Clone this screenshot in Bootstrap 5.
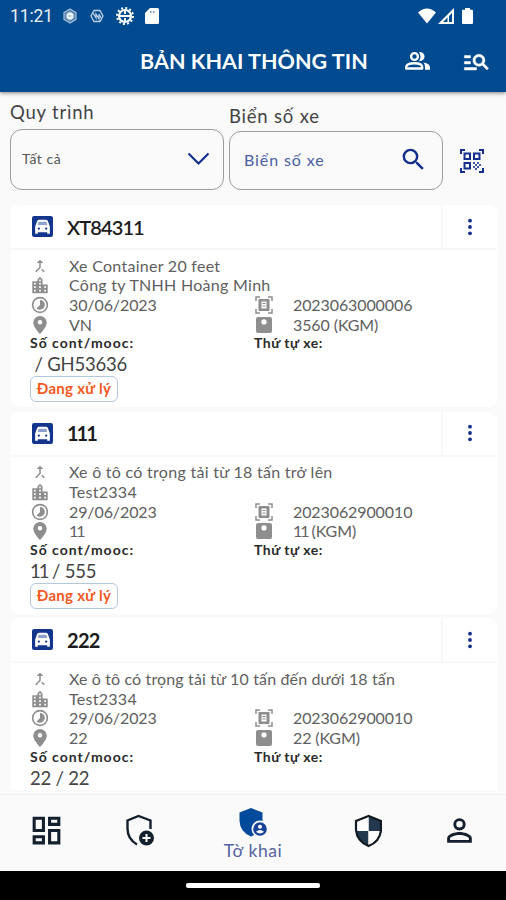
<!DOCTYPE html>
<html lang="vi">
<head>
<meta charset="utf-8">
<meta name="viewport" content="width=device-width, initial-scale=1">
<title>Bản khai thông tin</title>
<link rel="stylesheet" href="https://cdn.jsdelivr.net/npm/bootstrap@5.3.0/dist/css/bootstrap.min.css">
<style>
body{font-family:Lato,"Noto Sans",sans-serif;background:#fafafa;height:900px;color:#222;overflow:hidden}
svg{display:block;flex:none;fill:currentColor}
.app{height:900px;width:506px}
.top{height:92px;background:#004a8f;color:#fff;box-shadow:0 1px 4px rgba(0,0,0,.5);z-index:2}
.clock{font:400 17.5px/20px Roboto,sans-serif;width:44px;letter-spacing:-.1px;white-space:nowrap;color:#e6eef7}
.status{height:31px;padding:0 33px 0 10px}
.titlebar{height:60px;padding:0 15px 0 140px}
.ttl{font-size:21.5px;font-weight:700;line-height:28px;letter-spacing:.03px;width:264px;white-space:nowrap}
.filters{padding:9px 0 0 10px;height:98px}
.fcol{width:214px;margin-right:5px}
.flabel{font-size:18.5px;line-height:22px;letter-spacing:.8px;color:#444}
.field{border:1px solid #9c9c9c;border-radius:12px}
.f-proc{height:61px;margin-top:6px;padding:0 13px 2px 11px}
.f-plate{height:59px;margin-top:4px;padding:0 14px 2px 14px}
.f-proc span{font-size:14px;color:#555;letter-spacing:.5px}
.f-plate span{font-size:16px;color:#4a5da6;letter-spacing:.9px}
.qr{margin:47px 0 0 11px}
.navy{color:#14308c}
.lists{height:604px;overflow:hidden;padding:15px 9px 0 11px;flex:none}
.clip{height:585px;overflow:hidden}
.rec{height:202px;margin-bottom:4.6px;border-radius:8px;background:#fff}
.rec-h{height:45px;border-bottom:2px solid #f8f8f8}
.car{margin:0 14px 0 21px;width:21px;height:21px}
.plate{font-size:20px;font-weight:700;line-height:24px;color:#1c1c1c;letter-spacing:-.7px}
.plate.wide{letter-spacing:-1px}
.plate.alpha{font-weight:600;letter-spacing:-.9px}
.more{width:56px;border-left:2px solid #f8f8f8}
.rec-b{padding:6px 0 0 19px}
.ln{height:19.6px;font-size:16px;letter-spacing:.28px;color:#606060;white-space:nowrap}
.num{letter-spacing:-.1px}
.ones{letter-spacing:-2px}
.ln svg{color:#8e8e8e;margin-right:20px;margin-left:1px;width:18px;height:18px}
.half{width:224px}
.sub{font-size:14px;font-weight:700;line-height:18px;letter-spacing:1px;color:#2a2a2a}
.sub div+div{letter-spacing:.5px}
.val{font-size:18.5px;line-height:24px;letter-spacing:-.2px;color:#444;white-space:pre}
.state{height:26px;width:88px;border:1.5px solid #b4c8dc;border-radius:6px;color:#f4591f;font-size:15px;font-weight:700;letter-spacing:.3px;line-height:23px}
.tabs{height:77px;border-top:1px solid #f0f0f0;background:#fafafa;color:#14202e;flex:none}
.tabs .tab{width:93px;padding-bottom:5px}
.tabs .on{width:134px;padding:2px 0 0;color:#5563a0;font-size:17.5px;line-height:22px;letter-spacing:.6px}
.on span{margin-top:2px}
.home{height:29px;background:#000}
.pill{width:134px;height:5px;background:#fff;border-radius:2px}
</style>
<script src="https://cdn.jsdelivr.net/npm/bootstrap@5.3.0/dist/js/bootstrap.bundle.min.js"></script>
</head>
<body>
<svg class="d-none">
<symbol id="car" viewBox="0 0 20 20"><rect width="20" height="20" rx="2" fill="#14358c"/><path d="M3 17V10L4.800 5Q5.200 3.500 6.500 3.500H13.500Q14.800 3.500 15.200 5L17 10V17H14.500V15.500H5.500V17Z" fill="#fff"/><path d="M6.200 5.500H13.800L14.500 8.500H5.500Z" fill="#8ea0cc"/><circle cx="6.500" cy="12" r="1.100" fill="#14358c"/><circle cx="13.500" cy="12" r="1.100" fill="#14358c"/></symbol>
<symbol id="merge" viewBox="0 0 24 24"><path d="M17 20.410 18.410 19 15 15.590 13.590 17 17 20.410zM7.500 8H11v5.590L5.590 19 7 20.410l6-6V8h3.500L12 3.500 7.500 8z"/></symbol>
<symbol id="city" viewBox="2 1 20 21"><path d="M15 11V5l-3-3-3 3v2H3v14h18V11h-6zm-8 8H5v-2h2v2zm0-4H5v-2h2v2zm0-4H5V9h2v2zm6 8h-2v-2h2v2zm0-4h-2v-2h2v2zm0-4h-2V9h2v2zm0-4h-2V5h2v2zm6 12h-2v-2h2v2zm0-4h-2v-2h2v2z"/></symbol>
<symbol id="time" viewBox="1 1 22 22"><path d="M16.240 7.760A6 6 0 0 0 12 6v6l-4.240 4.240a6 6 0 0 0 8.480-8.480zM12 2a10 10 0 1 0 0 20 10 10 0 0 0 0-20zm0 18a8 8 0 1 1 0-16 8 8 0 0 1 0 16z"/></symbol>
<symbol id="pin" viewBox="2 2 20 20"><path d="M12 2a7.500 7.500 0 0 0-7.500 7.500c0 5 7.500 12.500 7.500 12.500s7.500-7.500 7.500-12.500A7.500 7.500 0 0 0 12 2zm0 9.500a2.500 2.500 0 1 1 0-5 2.500 2.500 0 0 1 0 5z"/></symbol>
<symbol id="scan" viewBox="0 0 18 18"><path d="M1 5V1h4M13 1h4v4M17 13v4h-4M5 17H1v-4" fill="none" stroke="currentColor" stroke-width="1.500"/><path d="M3.500 3h11v12h-11zM6.500 5.500v7h5v-7z" fill-rule="evenodd"/><path d="M7.500 7h3v1h-3zM7.500 9.500h3v1h-3z"/></symbol>
<symbol id="scale" viewBox="0 0 18 18"><path d="M3 1h12a2 2 0 0 1 2 2v12a2 2 0 0 1-2 2H3a2 2 0 0 1-2-2V3a2 2 0 0 1 2-2zM9 3.300a2.600 2.600 0 1 0 0 5.200 2.600 2.600 0 0 0 0-5.200z" fill-rule="evenodd"/></symbol>
<symbol id="dots" viewBox="0 0 4 18"><circle cx="2" cy="2.700" r="1.900"/><circle cx="2" cy="9" r="1.900"/><circle cx="2" cy="15.300" r="1.900"/></symbol>
</svg>
<div class="app d-flex flex-column">
<header class="top position-relative flex-shrink-0">
<div class="status d-flex align-items-center">
<span class="clock">11:21</span>
<svg class="ms-2" width="16" height="16" viewBox="0 0 16 16" fill="none" stroke="#a9c2dc" stroke-width="1.200"><path d="M8 1l6 3.500v7L8 15l-6-3.500v-7z" fill="#4f80b3"/><circle cx="8" cy="8" r="3.600"/><circle cx="8" cy="8" r="1"/></svg>
<svg class="ms-2" width="20" height="14" viewBox="-4 0 20 14"><g fill="none" stroke="#bdd0e5" stroke-width="1.300"><path d="M4 1.500h6L13 7l-3 5.500H4L1 7z"/><path d="M3 4l3 5V5l3 5V5l2 4"/></g></svg>
<svg class="ms-2" width="20" height="18" viewBox="-2 0 20 18"><circle cx="9" cy="9" r="8" fill="none" stroke="#fff" stroke-width="2" stroke-dasharray="2 2.190"/><circle cx="9" cy="9" r="6" fill="none" stroke="#fff" stroke-width="2.200"/><path d="M3 8h12v2H3zM8 3h2v4H8zM8 11h2v4H8z"/></svg>
<svg class="ms-2" width="17" height="16" viewBox="-3 0 17 16"><path d="M5 0h7.500Q14 0 14 1.500v13q0 1.500-1.500 1.500h-11Q0 16 0 14.500V5z"/><path d="M5 3h1.500v2H5zm3 0h1.500v2H8z" fill="#7a9fc5"/></svg>
<svg class="ms-auto" width="18" height="16" viewBox="0 0 18 16"><path d="M0 4.500Q9-3.500 18 4.500L9 15.500z"/></svg>
<svg width="18" height="16" viewBox="-2 0 18 16"><path d="M16 0v16H0zM14 5 5 14h9z" fill-rule="evenodd"/><path d="M9.500 8h1.500v6H9.500z"/></svg>
<svg class="ms-2" width="11" height="16" viewBox="0 0 11 16"><path d="M3 0h5v1.800h2q1 0 1 1V15q0 1-1 1H1q-1 0-1-1V2.800q0-1 1-1h2z"/></svg>
</div>
<div class="titlebar d-flex align-items-center">
<div class="ttl">BẢN KHAI THÔNG TIN</div>
<svg width="27" height="20" viewBox="0 0 27 20"><circle cx="10.500" cy="5.500" r="3.400" fill="none" stroke="#fff" stroke-width="2.400"/><path d="M2.200 17.500v-1.200q0-4 8-4t8 4v1.200z" fill="none" stroke="#fff" stroke-width="2.400" stroke-linejoin="round"/><path d="M15 1a4.600 4.600 0 1 1 0 9q3-4 0-9zM19.500 11.500q6.500 1 6.500 5v2.200h-5V16q0-3-1.500-4.500z"/></svg>
<svg class="ms-auto" width="29" height="29" viewBox="0 0 24 24" stroke="#fff" stroke-width=".4"><path d="M7 9H2V7h5v2zm0 3H2v2h5v-2zm13.590 7-3.830-3.830c-.8.520-1.740.830-2.760.830a5 5 0 1 1 5-5c0 1.020-.310 1.960-.830 2.750L22 17.590 20.590 19zM17 11a3 3 0 1 0-6 0 3 3 0 0 0 6 0zM2 19h10v-2H2v2z"/></svg>
</div>
</header>
<section class="filters d-flex flex-shrink-0">
<div class="fcol"><div class="flabel">Quy trình</div>
<div class="field f-proc d-flex align-items-center justify-content-between"><span>Tất cả</span>
<svg class="navy" width="23" height="14" viewBox="0 0 23 14"><path d="M1.500 1.500l10 10 10-10" fill="none" stroke="currentColor" stroke-width="2.200"/></svg></div></div>
<div class="fcol pt-1"><div class="flabel">Biển số xe</div>
<div class="field f-plate d-flex align-items-center justify-content-between"><span>Biển số xe</span>
<svg class="navy" width="29" height="29" viewBox="0 0 24 24"><path d="M15.500 14h-.790l-.280-.270A6.470 6.470 0 0 0 16 9.500 6.500 6.500 0 1 0 9.500 16c1.610 0 3.090-.590 4.230-1.570l.270.280v.790l5 4.990L20.490 19l-4.990-5zm-6 0a4.500 4.500 0 1 1 0-9 4.500 4.500 0 0 1 0 9z"/></svg></div></div>
<svg class="navy qr" width="26" height="26" viewBox="0 0 26 26"><g fill="none" stroke="currentColor" stroke-width="2"><path d="M2 6V2h4M20 2h4v4M24 20v4h-4M6 24H2v-4"/><path d="M5.500 5.500h5.500v5.500H5.500zM15 5.500h5.500v5.500H15zM5.500 15h5.500v5.500H5.500z"/></g><path d="M14 14h2v2h-2zM18 14h2v2h-2zM16 16h2v2h-2zM20 16h2v2h-2zM14 18h2v2h-2zM18 18h2v2h-2zM16 20h2v2h-2z" opacity=".8"/></svg>
</section>
<main class="lists"><div class="clip">
<article class="rec">
<div class="rec-h d-flex"><div class="d-flex align-items-center flex-grow-1"><svg class="car"><use href="#car"/></svg><span class="plate alpha">XT84311</span></div><div class="more d-flex align-items-center justify-content-center navy"><svg width="4" height="18"><use href="#dots"/></svg></div></div>
<div class="rec-b">
<div class="ln d-flex align-items-center"><svg><use href="#merge"/></svg>Xe Container 20 feet</div>
<div class="ln d-flex align-items-center"><svg><use href="#city"/></svg>Công ty TNHH Hoàng Minh</div>
<div class="d-flex"><div class="ln half num d-flex align-items-center"><svg><use href="#time"/></svg>30/06/2023</div><div class="ln num d-flex align-items-center"><svg><use href="#scan"/></svg>2023063000006</div></div>
<div class="d-flex"><div class="ln half num d-flex align-items-center"><svg><use href="#pin"/></svg>VN</div><div class="ln num d-flex align-items-center"><svg><use href="#scale"/></svg>3560 (KGM)</div></div>
<div class="d-flex sub"><div class="half">Số cont/mooc:</div><div>Thứ tự xe:</div></div>
<div class="val"> / GH53636</div><div class="state text-center">Đang xử lý</div>
</div></article>
<article class="rec">
<div class="rec-h d-flex"><div class="d-flex align-items-center flex-grow-1"><svg class="car"><use href="#car"/></svg><span class="plate"><span class="ones">11</span><span>1</span></span></div><div class="more d-flex align-items-center justify-content-center navy"><svg width="4" height="18"><use href="#dots"/></svg></div></div>
<div class="rec-b">
<div class="ln d-flex align-items-center"><svg><use href="#merge"/></svg>Xe ô tô có trọng tải từ 18 tấn trở lên</div>
<div class="ln d-flex align-items-center"><svg><use href="#city"/></svg>Test2334</div>
<div class="d-flex"><div class="ln half num d-flex align-items-center"><svg><use href="#time"/></svg>29/06/2023</div><div class="ln num d-flex align-items-center"><svg><use href="#scan"/></svg>2023062900010</div></div>
<div class="d-flex"><div class="ln half ones d-flex align-items-center"><svg><use href="#pin"/></svg>11</div><div class="ln num d-flex align-items-center"><svg><use href="#scale"/></svg><span><span class="ones">11</span> (KGM)</span></div></div>
<div class="d-flex sub"><div class="half">Số cont/mooc:</div><div>Thứ tự xe:</div></div>
<div class="val"><span class="ones">11</span> / 555</div><div class="state text-center">Đang xử lý</div>
</div></article>
<article class="rec">
<div class="rec-h d-flex"><div class="d-flex align-items-center flex-grow-1"><svg class="car"><use href="#car"/></svg><span class="plate">222</span></div><div class="more d-flex align-items-center justify-content-center navy"><svg width="4" height="18"><use href="#dots"/></svg></div></div>
<div class="rec-b">
<div class="ln num d-flex align-items-center"><svg><use href="#merge"/></svg><span style="letter-spacing:.14px">Xe ô tô có trọng tải từ 10 tấn đến dưới 18 tấn</span></div>
<div class="ln d-flex align-items-center"><svg><use href="#city"/></svg>Test2334</div>
<div class="d-flex"><div class="ln half num d-flex align-items-center"><svg><use href="#time"/></svg>29/06/2023</div><div class="ln num d-flex align-items-center"><svg><use href="#scan"/></svg>2023062900010</div></div>
<div class="d-flex"><div class="ln half num d-flex align-items-center"><svg><use href="#pin"/></svg>22</div><div class="ln num d-flex align-items-center"><svg><use href="#scale"/></svg>22 (KGM)</div></div>
<div class="d-flex sub"><div class="half">Số cont/mooc:</div><div>Thứ tự xe:</div></div>
<div class="val">22 / 22</div>
</div></article>
</div></main>
<nav class="tabs d-flex align-items-center justify-content-center">
<div class="tab d-flex justify-content-center"><svg width="37" height="37" viewBox="0 0 24 24"><path d="M19 5v2h-4V5h4M9 5v6H5V5h4m10 8v6h-4v-6h4M9 17v2H5v-2h4M21 3h-8v6h8V3zM11 3H3v10h8V3zm10 8h-8v10h8V11zm-10 4H3v6h8v-6z"/></svg></div>
<div class="tab d-flex justify-content-center"><svg width="30" height="33" viewBox="0 0 30 33"><path d="M25.500 15V6.500L13.500 2 2.500 6.500v8Q2.500 25 12 30.500" fill="none" stroke="currentColor" stroke-width="2.400"/><circle cx="21.500" cy="24" r="7.500"/><path d="M17.500 24h8M21.500 20v8" stroke="#fff" stroke-width="2"/></svg></div>
<div class="tab on d-flex flex-column align-items-center"><svg width="30" height="31" viewBox="0 0 30 31"><path d="M13 1 1.500 5.500v8.500Q2 25 13 29.500q10-4.500 11.500-15.500V5.500z" fill="#004a9b"/><circle cx="22" cy="22" r="8.500" fill="#fafafa"/><circle cx="22" cy="22" r="6.800" fill="#1b4496"/><circle cx="22" cy="19.800" r="2" fill="#fff"/><path d="M18 24.800q4-3.500 8 0-4 3.500-8 0z" fill="#fff"/></svg><span>Tờ khai</span></div>
<div class="tab d-flex justify-content-center"><svg width="30" height="34" viewBox="-1.500 0 30 34"><path d="M15 2 2.500 7v9Q3.500 27.500 15 32q11.500-4.500 12.500-16V7z" fill="#fff"/><path d="M15 2v15H2.500Q4 27.500 15 32V17h12.500V7z" fill="#23384d"/><path d="M15 17v15q11.500-4.500 12.500-15zM15 17V2L2.500 7v10z" fill="#fff"/><path d="M15 2 2.500 7v9Q3.500 27.500 15 32q11.500-4.500 12.500-16V7z" fill="none" stroke="#101820" stroke-width="2.200"/></svg></div>
<div class="tab d-flex justify-content-center"><svg width="37" height="37" viewBox="0 0 24 24"><path d="M12 5.900a2.100 2.100 0 1 1 0 4.200 2.100 2.100 0 0 1 0-4.200m0 9c2.970 0 6.100 1.460 6.100 2.100v1.100H5.900V17c0-.640 3.130-2.100 6.100-2.100M12 4a4 4 0 1 0 0 8 4 4 0 0 0 0-8zm0 9c-2.670 0-8 1.340-8 4v3h16v-3c0-2.660-5.330-4-8-4z"/></svg></div>
</nav>
<div class="home d-flex align-items-center justify-content-center flex-shrink-0"><div class="pill"></div></div>
</div>
</body>
</html>
